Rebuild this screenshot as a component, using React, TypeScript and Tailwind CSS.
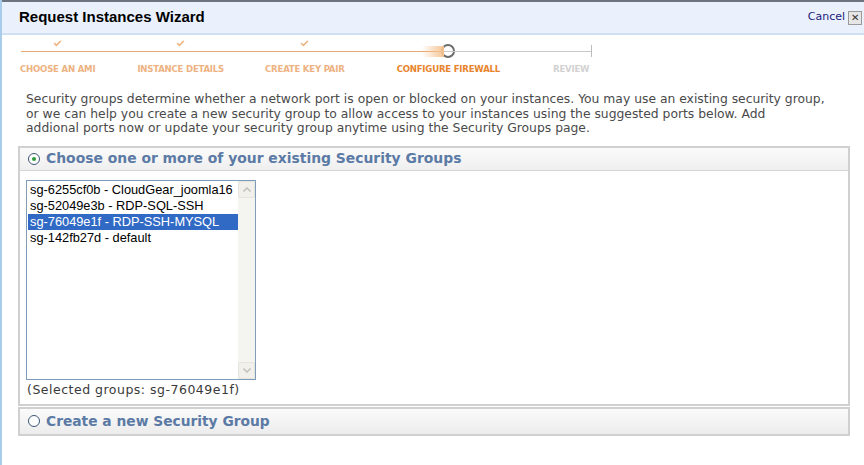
import { Check } from "lucide-react"

const steps = [
  { label: "Choose an AMI", ml: "ml-[18px]", done: true },
  { label: "Instance Details", ml: "ml-[42px]", done: true },
  { label: "Create Key Pair", ml: "ml-[41px]", done: true },
  { label: "Configure Firewall", ml: "ml-[52px]", done: false, current: true },
  { label: "Review", ml: "ml-[53px]", done: false },
]

const groups = [
  "sg-6255cf0b - CloudGear_joomla16",
  "sg-52049e3b - RDP-SQL-SSH",
  "sg-76049e1f - RDP-SSH-MYSQL",
  "sg-142fb27d - default",
]

function Radio({ checked }: { checked?: boolean }) {
  return (
    <span className="flex h-[12px] w-[12px] items-center justify-center rounded-full border border-[#3c5675] bg-white">
      {checked && <span className="h-[4px] w-[4px] rounded-full bg-[#2f9a3a]" />}
    </span>
  )
}

export default function App() {
  return (
    <div className="h-[465px] w-[864px] overflow-hidden border-l-2 border-[#a9cce9] bg-white font-['Liberation_Sans',sans-serif]">
      {/* header */}
      <div className="flex h-[35px] items-center border-t-2 border-b-2 border-t-[#6d7480] border-b-[#cfe0f2] bg-[#eaf1fc] pl-[17px] pr-[2px]">
        <h1 className="text-[15px] font-bold text-black">Request Instances Wizard</h1>
        <div className="ml-auto flex items-center gap-[3px]">
          <span className="font-['DejaVu_Sans',sans-serif] text-[11px] text-[#1b1b7a]">Cancel</span>
          <span className="flex h-[14px] w-[14px] items-center justify-center border border-[#9a9a9a] bg-[#e6e6e6] text-[10px] leading-none text-[#333]">✕</span>
        </div>
      </div>

      {/* progress */}
      <div className="relative h-[40px]">
        <div className="absolute left-[19px] top-[16px] h-px w-[422px] bg-[#e9a873]" />
        <div className="absolute left-[441px] top-[16px] h-px w-[149px] bg-[#c8c8c8]" />
        <div className="absolute left-[589px] top-[10px] h-[12px] w-px bg-[#bdbdbd]" />
        <div className="absolute left-[420px] top-[11px] h-[11px] w-[22px] bg-gradient-to-r from-transparent to-[#f6c391]" />
        <div className="flex">
          {steps.map((s) => (
            <div key={s.label} className={`${s.ml} flex flex-col items-center`}>
              <div className="flex h-[26px] items-start justify-center">
                {s.done && <Check className="mt-[4px] h-[9px] w-[9px] text-[#eeb27d]" strokeWidth={4} />}
                {s.current && (
                  <span className="mt-[9px] h-[14px] w-[14px] rounded-full border-2 border-[#6b6b6b] bg-white" />
                )}
              </div>
              <span
                className={`mt-[1px] font-['DejaVu_Sans_Condensed','DejaVu_Sans',sans-serif] text-[9.5px] font-bold uppercase tracking-[-0.2px] ${
                  s.current ? "text-[#e7842c]" : s.done ? "text-[#edb282]" : "text-[#d2d2d2]"
                }`}
              >
                {s.label}
              </span>
            </div>
          ))}
        </div>
      </div>

      {/* description */}
      <p className="mt-[17px] ml-[24px] mr-[10px] whitespace-nowrap font-['DejaVu_Sans',sans-serif] text-[12.35px] leading-[14.5px] text-[#4a4a4a]">
        Security groups determine whether a network port is open or blocked on your instances. You may use an existing security group,
        <br />
        or we can help you create a new security group to allow access to your instances using the suggested ports below. Add
        <br />
        addional ports now or update your security group anytime using the Security Groups page.
      </p>

      {/* existing groups */}
      <div className="mt-[10px] ml-[16px] w-[832px] border-2 border-[#d0d0d0]">
        <div className="flex h-[23px] items-center gap-[6px] border-b border-[#d6d6d6] bg-gradient-to-b from-[#fbfbfb] to-[#efefef] pl-[8px]">
          <Radio checked />
          <span className="font-['DejaVu_Sans',sans-serif] text-[13.9px] font-bold text-[#5b7aa5]">
            Choose one or more of your existing Security Groups
          </span>
        </div>
        <div className="px-[6px] pt-[9px] pb-[6px]">
          <div className="flex h-[200px] w-[230px] border border-[#7f9db9] bg-white">
            <div className="flex-1 pt-[1px] pl-px">
              {groups.map((g, i) => (
                <div
                  key={g}
                  className={`h-[16px] pl-[2px] text-[12.8px] leading-[16px] ${
                    i === 2 ? "bg-[#316ac5] text-white" : "text-black"
                  }`}
                >
                  {g}
                </div>
              ))}
            </div>
            <div className="flex w-[17px] flex-col justify-between bg-[#f4f4f0]">
              <div className="flex h-[17px] items-center justify-center rounded-[2px] border border-[#e4e3dd] bg-[#f1f0ea] text-[#c4c3bd]">
                <svg width="8" height="5" viewBox="0 0 8 5"><path d="M0.5 4.5 L4 1 L7.5 4.5" fill="none" stroke="currentColor" strokeWidth="1.6" /></svg>
              </div>
              <div className="flex h-[17px] items-center justify-center rounded-[2px] border border-[#e4e3dd] bg-[#f1f0ea] text-[#c4c3bd]">
                <svg width="8" height="5" viewBox="0 0 8 5"><path d="M0.5 0.5 L4 4 L7.5 0.5" fill="none" stroke="currentColor" strokeWidth="1.6" /></svg>
              </div>
            </div>
          </div>
          <p className="mt-[2px] pl-px font-['DejaVu_Sans',sans-serif] text-[12.5px] leading-[16px] tracking-[0.5px] text-[#3a3a3a]">
            (Selected groups: sg-76049e1f)
          </p>
        </div>
      </div>

      {/* new group */}
      <div className="mt-[1px] ml-[16px] flex h-[29px] w-[832px] items-center gap-[6px] border-2 border-[#d0d0d0] bg-gradient-to-b from-[#fbfbfb] to-[#ececec] pl-[8px]">
        <Radio />
        <span className="font-['DejaVu_Sans',sans-serif] text-[13.8px] font-bold text-[#5b7aa5]">
          Create a new Security Group
        </span>
      </div>
    </div>
  )
}
